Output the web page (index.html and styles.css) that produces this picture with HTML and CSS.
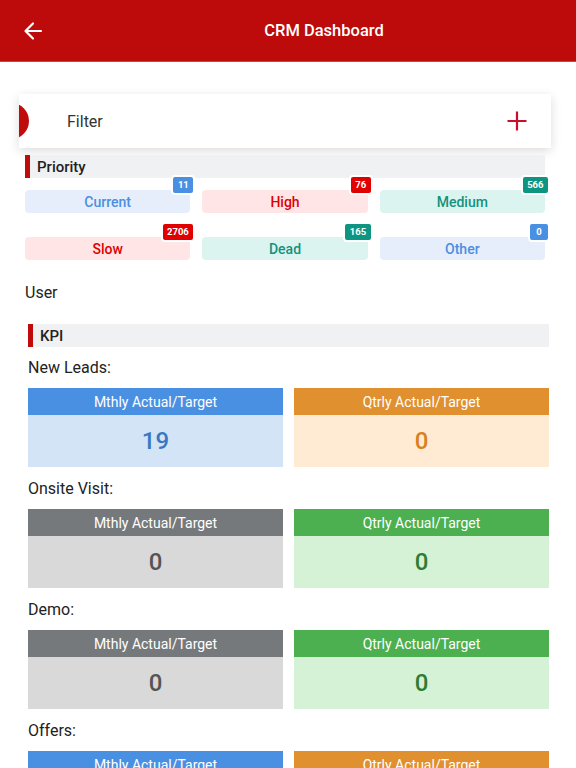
FILE: index.html
```html
<!DOCTYPE html>
<html lang="en">
<head>
  <meta charset="UTF-8" />
  <meta name="viewport" content="width=device-width, initial-scale=1.0" />
  <title>CRM Dashboard</title>
  <link rel="stylesheet" href="styles.css">
</head>
<body>
  <header class="app-bar">
    <button class="back-btn" aria-label="Back">
      <svg width="24" height="24" viewBox="0 0 24 24"><path d="M20 12H5M12 4.5L4.5 12 12 19.5" fill="none" stroke="#fff" stroke-width="2.2" stroke-linecap="round" stroke-linejoin="round"/></svg>
    </button>
    <h1 class="app-title">CRM Dashboard</h1>
  </header>

  <div class="filter-card">
    <span class="filter-dot"></span>
    <span class="filter-label">Filter</span>
    <svg class="filter-add" width="22" height="22" viewBox="0 0 22 22"><path d="M11 1.5v19M1.5 11h19" stroke="#c8102e" stroke-width="2.2"/></svg>
  </div>

  <section class="priority">
    <div class="section-head">Priority</div>
    <div class="chips">
      <div class="chip blue">Current<span class="badge">11</span></div>
      <div class="chip red">High<span class="badge">76</span></div>
      <div class="chip teal">Medium<span class="badge">566</span></div>
      <div class="chip red">Slow<span class="badge">2706</span></div>
      <div class="chip teal">Dead<span class="badge">165</span></div>
      <div class="chip blue">Other<span class="badge">0</span></div>
    </div>
  </section>

  <div class="user-label">User</div>

  <section class="kpi">
    <div class="section-head">KPI</div>

    <div class="kpi-label">New Leads:</div>
    <div class="kpi-row">
      <div class="kpi-card blue"><div class="kpi-head">Mthly Actual/Target</div><div class="kpi-value">19</div></div>
      <div class="kpi-card orange"><div class="kpi-head">Qtrly Actual/Target</div><div class="kpi-value">0</div></div>
    </div>

    <div class="kpi-label">Onsite Visit:</div>
    <div class="kpi-row">
      <div class="kpi-card gray"><div class="kpi-head">Mthly Actual/Target</div><div class="kpi-value">0</div></div>
      <div class="kpi-card green"><div class="kpi-head">Qtrly Actual/Target</div><div class="kpi-value">0</div></div>
    </div>

    <div class="kpi-label">Demo:</div>
    <div class="kpi-row">
      <div class="kpi-card gray"><div class="kpi-head">Mthly Actual/Target</div><div class="kpi-value">0</div></div>
      <div class="kpi-card green"><div class="kpi-head">Qtrly Actual/Target</div><div class="kpi-value">0</div></div>
    </div>

    <div class="kpi-label">Offers:</div>
    <div class="kpi-row">
      <div class="kpi-card blue"><div class="kpi-head">Mthly Actual/Target</div><div class="kpi-value">0</div></div>
      <div class="kpi-card orange"><div class="kpi-head">Qtrly Actual/Target</div><div class="kpi-value">0</div></div>
    </div>
  </section>
</body>
</html>
```

FILE: styles.css
```css
body {
  margin: 0;
  font-family: Roboto, 'Noto Sans', sans-serif;
  color: #222;
  background: #fff;
  overflow: hidden;
}

/* top bar */
.app-bar {
  height: 62px;
  background: #bd0a0a;
  border-bottom: 1px solid #d9403f;
  box-sizing: border-box;
  display: flex;
  align-items: center;
}

.back-btn {
  width: 66px;
  height: 62px;
  padding: 0 0 0 21px;
  border: none;
  background: none;
  display: flex;
  align-items: center;
}

.app-title {
  flex: 1;
  margin: 0 0 1px 6px;
  text-align: center;
  color: #fff;
  font-size: 16.5px;
  font-weight: 500;
}

/* filter */
.filter-card {
  margin: 32px 25px 0 19px;
  height: 54px;
  background: #fff;
  box-shadow: 0 3px 10px rgba(0, 0, 0, 0.14);
  display: flex;
  align-items: center;
  overflow: hidden;
}

.filter-dot {
  width: 36px;
  height: 36px;
  border-radius: 50%;
  background: #c00b0b;
  margin-left: -26px;
  flex-shrink: 0;
}

.filter-label {
  flex: 1;
  margin-left: 38px;
  font-size: 16px;
  color: #333;
}

.filter-add {
  margin-right: 23px;
}

/* section heads */
.section-head {
  height: 23px;
  line-height: 24px;
  background: #f0f1f3;
  border-left: 5px solid #c00b0b;
  padding-left: 7px;
  font-size: 15px;
  font-weight: 500;
  color: #222;
}

.priority {
  margin: 7px 31px 0 25px;
}

.chips {
  margin-top: 12px;
  display: grid;
  grid-template-columns: repeat(3, 1fr);
  gap: 24px 12px;
}

.chip {
  position: relative;
  height: 23px;
  line-height: 24px;
  border-radius: 4px;
  text-align: center;
  font-size: 14px;
  font-weight: 500;
}

.badge {
  position: absolute;
  top: -15px;
  right: -5px;
  height: 16px;
  line-height: 16px;
  min-width: 9px;
  padding: 0 4.5px;
  border: 2px solid #fff;
  border-radius: 4px;
  color: #fff;
  font-size: 9.5px;
  font-weight: 700;
}

.chip.blue { background: #e6eefb; color: #4a8fe2; }
.chip.blue .badge { background: #4a90e2; }
.chip.red { background: #ffe5e5; color: #e00000; }
.chip.red .badge { background: #e00000; }
.chip.teal { background: #dcf4f0; color: #13927e; }
.chip.teal .badge { background: #0e9582; }

.user-label {
  margin: 23px 0 0 25px;
  font-size: 16px;
  line-height: 20px;
  color: #222;
}

/* kpi */
.kpi {
  margin: 21px 27px 0 28px;
}

.kpi-label {
  margin-top: 10px;
  font-size: 16px;
  line-height: 21px;
  color: #222;
}

.kpi-row {
  margin: 10px 0 11px;
  display: grid;
  grid-template-columns: 1fr 1fr;
  gap: 11px;
}

.kpi-head {
  height: 27px;
  line-height: 28px;
  text-align: center;
  color: #fff;
  font-size: 14px;
}

.kpi-value {
  height: 52px;
  line-height: 52px;
  text-align: center;
  font-size: 24px;
  font-weight: 500;
}

.kpi-card.blue .kpi-head { background: #4a90e2; }
.kpi-card.blue .kpi-value { background: #d3e4f7; color: #3b77c0; }
.kpi-card.orange .kpi-head { background: #e0902e; }
.kpi-card.orange .kpi-value { background: #ffebd4; color: #d9801a; }
.kpi-card.gray .kpi-head { background: #76797b; }
.kpi-card.gray .kpi-value { background: #d9d9d9; color: #555; }
.kpi-card.green .kpi-head { background: #4caf50; }
.kpi-card.green .kpi-value { background: #d5f2d6; color: #2e7d32; }
```
